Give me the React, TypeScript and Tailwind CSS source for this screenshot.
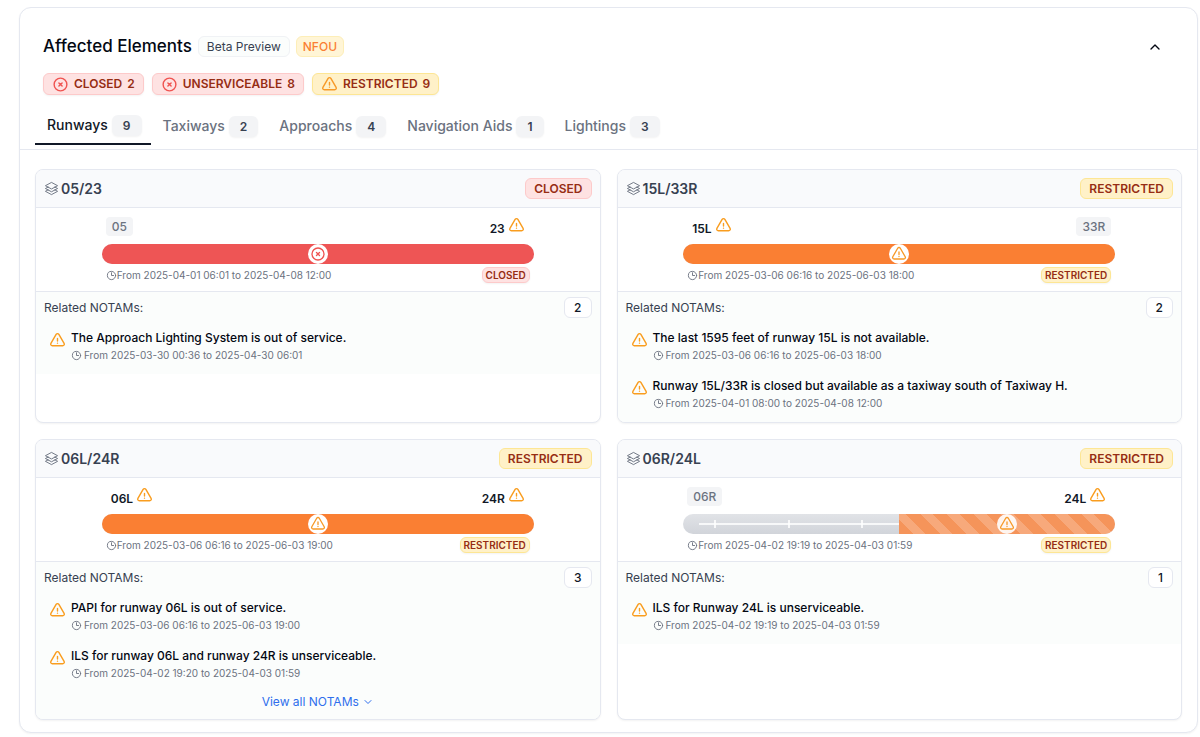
import { useState } from 'react'
import type { ReactNode } from 'react'
import clsx from 'clsx'
import { ChevronDown, ChevronUp } from 'lucide-react'
import {
  HiOutlineClock,
  HiOutlineExclamationTriangle,
  HiOutlineSquare3Stack3D,
  HiOutlineXCircle,
} from 'react-icons/hi2'

type Status = 'CLOSED' | 'UNSERVICEABLE' | 'RESTRICTED'

interface RunwayEnd {
  name: string
  warning: boolean
}

interface Notam {
  text: string
  period: string
}

interface Runway {
  id: string
  status: Status
  ends: [RunwayEnd, RunwayEnd]
  // 'end' means only the half next to the second threshold is affected
  extent: 'full' | 'end'
  period: string
  total: number
  notams: Notam[]
}

const summary: { status: Status; count: number }[] = [
  { status: 'CLOSED', count: 2 },
  { status: 'UNSERVICEABLE', count: 8 },
  { status: 'RESTRICTED', count: 9 },
]

const tabs = [
  { label: 'Runways', count: 9 },
  { label: 'Taxiways', count: 2 },
  { label: 'Approachs', count: 4 },
  { label: 'Navigation Aids', count: 1 },
  { label: 'Lightings', count: 3 },
]

const runways: Runway[] = [
  {
    id: '05/23',
    status: 'CLOSED',
    ends: [
      { name: '05', warning: false },
      { name: '23', warning: true },
    ],
    extent: 'full',
    period: 'From 2025-04-01 06:01 to 2025-04-08 12:00',
    total: 2,
    notams: [
      {
        text: 'The Approach Lighting System is out of service.',
        period: 'From 2025-03-30 00:36 to 2025-04-30 06:01',
      },
    ],
  },
  {
    id: '15L/33R',
    status: 'RESTRICTED',
    ends: [
      { name: '15L', warning: true },
      { name: '33R', warning: false },
    ],
    extent: 'full',
    period: 'From 2025-03-06 06:16 to 2025-06-03 18:00',
    total: 2,
    notams: [
      {
        text: 'The last 1595 feet of runway 15L is not available.',
        period: 'From 2025-03-06 06:16 to 2025-06-03 18:00',
      },
      {
        text: 'Runway 15L/33R is closed but available as a taxiway south of Taxiway H.',
        period: 'From 2025-04-01 08:00 to 2025-04-08 12:00',
      },
    ],
  },
  {
    id: '06L/24R',
    status: 'RESTRICTED',
    ends: [
      { name: '06L', warning: true },
      { name: '24R', warning: true },
    ],
    extent: 'full',
    period: 'From 2025-03-06 06:16 to 2025-06-03 19:00',
    total: 3,
    notams: [
      {
        text: 'PAPI for runway 06L is out of service.',
        period: 'From 2025-03-06 06:16 to 2025-06-03 19:00',
      },
      {
        text: 'ILS for runway 06L and runway 24R is unserviceable.',
        period: 'From 2025-04-02 19:20 to 2025-04-03 01:59',
      },
    ],
  },
  {
    id: '06R/24L',
    status: 'RESTRICTED',
    ends: [
      { name: '06R', warning: false },
      { name: '24L', warning: true },
    ],
    extent: 'end',
    period: 'From 2025-04-02 19:19 to 2025-04-03 01:59',
    total: 1,
    notams: [
      {
        text: 'ILS for Runway 24L is unserviceable.',
        period: 'From 2025-04-02 19:19 to 2025-04-03 01:59',
      },
    ],
  },
]

const badgeColors: Record<Status, string> = {
  CLOSED: 'border-[#fdcaca] bg-[#fee2e2] text-[#962d14]',
  UNSERVICEABLE: 'border-[#fdcaca] bg-[#fee2e2] text-[#962d14]',
  RESTRICTED: 'border-[#fde694] bg-[#fff1c8] text-[#962d14]',
}

function StatusIcon({ status, className }: { status: Status; className?: string }) {
  return status === 'RESTRICTED' ? (
    <HiOutlineExclamationTriangle strokeWidth={2} className={clsx('text-[#f79a28]', className)} />
  ) : (
    <HiOutlineXCircle strokeWidth={2} className={clsx('text-[#ef5350]', className)} />
  )
}

function WarningIcon() {
  return <HiOutlineExclamationTriangle strokeWidth={2} className="size-[17px] shrink-0 text-[#f99d1f]" />
}

function Period({ children, className }: { children: ReactNode; className?: string }) {
  return (
    <p className={clsx('flex items-center text-[10px] leading-[14px] text-[#6b7280]', className)}>
      <HiOutlineClock strokeWidth={2} className="size-[11px] shrink-0" />
      {children}
    </p>
  )
}

function EndLabel({ end }: { end: RunwayEnd }) {
  if (!end.warning) {
    return (
      <span className="rounded bg-[#f3f4f6] px-[6px] text-xs leading-[19px] font-medium text-[#6b7280]">
        {end.name}
      </span>
    )
  }
  return (
    <span className="flex items-start gap-[3px] px-[5px]">
      <span className="pt-[2px] text-xs leading-[19px] font-semibold text-[#111827]">{end.name}</span>
      <WarningIcon />
    </span>
  )
}

function RunwayStrip({ runway }: { runway: Runway }) {
  const partial = runway.extent === 'end'
  return (
    <div className="relative h-5 overflow-hidden rounded-full bg-linear-to-b from-[#e1e3e7] to-[#d1d4da]">
      <div className="flex h-full items-center px-4">
        <div className="h-[2px] flex-1 bg-white/80" />
      </div>
      <div className="absolute inset-0 flex items-center justify-between px-[31px]">
        {[0, 1, 2, 3, 4, 5].map((tick) => (
          <span key={tick} className="h-2 w-[2px] bg-white/80" />
        ))}
      </div>
      <div
        className={clsx(
          'absolute inset-y-0 right-0 flex items-center justify-center',
          partial
            ? 'left-1/2 bg-[#f5945a] bg-[repeating-linear-gradient(45deg,transparent_0_10px,rgba(255,255,255,0.2)_10px_19px)]'
            : 'left-0',
          !partial && (runway.status === 'CLOSED' ? 'bg-[#ee5555]' : 'bg-[#fa7f33]'),
        )}
      >
        <span className={clsx('flex size-5 items-center justify-center rounded-full', partial ? 'bg-white/90' : 'bg-white')}>
          <StatusIcon status={runway.status} className="size-4" />
        </span>
      </div>
    </div>
  )
}

function RunwayCard({ runway }: { runway: Runway }) {
  return (
    <article className="overflow-hidden rounded-lg border border-[#e5e8f0] bg-white shadow-xs">
      <header className="flex items-center justify-between border-b border-[#e5e8f0] bg-[#f9fafc] p-2">
        <h3 className="flex items-center gap-[2px] text-sm leading-5 font-semibold text-[#374151]">
          <HiOutlineSquare3Stack3D className="size-[15px] text-[#6b7280]" />
          {runway.id}
        </h3>
        <span
          className={clsx(
            'rounded-md border px-2 text-xs leading-[19px] font-semibold',
            badgeColors[runway.status],
          )}
        >
          {runway.status}
        </span>
      </header>

      <div className="border-b border-[#e5e8f0] px-2 pt-[9px] pb-2">
        <div className="mx-auto max-w-[432px]">
          <div className="flex h-[19px] items-start justify-between px-1">
            <EndLabel end={runway.ends[0]} />
            <EndLabel end={runway.ends[1]} />
          </div>
          <div className="mt-2">
            <RunwayStrip runway={runway} />
          </div>
          <div className="mt-[3px] flex items-center justify-between px-1">
            <Period>{runway.period}</Period>
            <span
              className={clsx(
                'rounded-md border px-[3px] text-[10px] leading-[14px] font-semibold shadow-xs',
                badgeColors[runway.status],
              )}
            >
              {runway.status}
            </span>
          </div>
        </div>
      </div>

      <div className="bg-[#fbfdfc]">
        <div className="flex h-[34px] items-start justify-between px-2 pt-[5px]">
          <h4 className="text-xs leading-[21px] text-[#374151]">Related NOTAMs:</h4>
          <span className="rounded-md border border-[#e5e8f0] bg-white px-[9px] text-xs leading-[19px] font-medium text-[#111827]">
            {runway.total}
          </span>
        </div>
        <ul>
          {runway.notams.map((notam) => (
            <li key={notam.text} className="flex gap-[5px] px-[13px] pt-[2px] pb-3">
              <div className="pt-1">
                <WarningIcon />
              </div>
              <div>
                <p className="text-xs leading-5 font-medium text-[#030712]">{notam.text}</p>
                <Period className="gap-[2px]">{notam.period}</Period>
              </div>
            </li>
          ))}
        </ul>
        {runway.total > 2 && (
          <button
            type="button"
            className="mx-auto flex h-[27px] items-start gap-[3px] text-xs leading-5 text-[#2f6fed]"
          >
            View all NOTAMs
            <ChevronDown className="mt-1 size-3" />
          </button>
        )}
      </div>
    </article>
  )
}

export default function App() {
  const [activeTab, setActiveTab] = useState('Runways')
  const [open, setOpen] = useState(true)

  return (
    <main className="bg-white pt-[7px] pr-[2px] pb-1 pl-[19px] font-['Inter',sans-serif] text-[#030712]">
      <section className="rounded-xl border border-[#e5e8f0] bg-white shadow-xs">
        <header className="border-b border-[#e5e8f0] px-[15px] pt-7 pb-1">
          <div className="flex items-center gap-[6px] px-2">
            <h2 className="text-[17px] leading-[21px] font-medium">Affected Elements</h2>
            <span className="rounded-md border border-[#f0f2f5] bg-[#fbfdfc] px-2 text-xs leading-[19px] text-[#374151]">
              Beta Preview
            </span>
            <span className="rounded-md border border-[#fdeeb8] bg-[#fff5d6] px-[6px] text-xs leading-[19px] font-medium text-[#fa7f33]">
              NFOU
            </span>
            <button
              type="button"
              aria-label="Collapse affected elements"
              aria-expanded={open}
              onClick={() => setOpen(!open)}
              className="mr-[11px] ml-auto"
            >
              <ChevronUp className={clsx('size-4', !open && 'rotate-180')} />
            </button>
          </div>

          <div className="mt-4 flex gap-2 px-2">
            {summary.map(({ status, count }) => (
              <span
                key={status}
                className={clsx(
                  'flex items-center gap-[5px] rounded-md border px-2 text-xs leading-5 font-semibold shadow-xs',
                  badgeColors[status],
                )}
              >
                <StatusIcon status={status} className="size-[17px]" />
                {status}
                <span>{count}</span>
              </span>
            ))}
          </div>

          <div role="tablist" className="mt-4 flex items-stretch">
            {tabs.map(({ label, count }) => {
              const active = label === activeTab
              return (
                <button
                  key={label}
                  type="button"
                  role="tab"
                  aria-selected={active}
                  onClick={() => setActiveTab(label)}
                  className={clsx(
                    'flex h-[34px] items-center gap-1 pr-[9px] pb-1 pl-3 text-sm leading-5 font-medium',
                    active ? 'border-b-2 border-[#111827] text-[#111827]' : 'text-[#6b7280]',
                  )}
                >
                  {label}
                  <span className="rounded-md bg-[#f3f4f6] px-[11px] text-xs leading-[21px] font-semibold text-[#374151] shadow-xs">
                    {count}
                  </span>
                </button>
              )
            })}
          </div>
        </header>

        {open && (
          <div className="grid grid-cols-2 gap-4 px-[15px] pt-[19px] pb-3">
            {runways.map((runway) => (
              <RunwayCard key={runway.id} runway={runway} />
            ))}
          </div>
        )}
      </section>
    </main>
  )
}
